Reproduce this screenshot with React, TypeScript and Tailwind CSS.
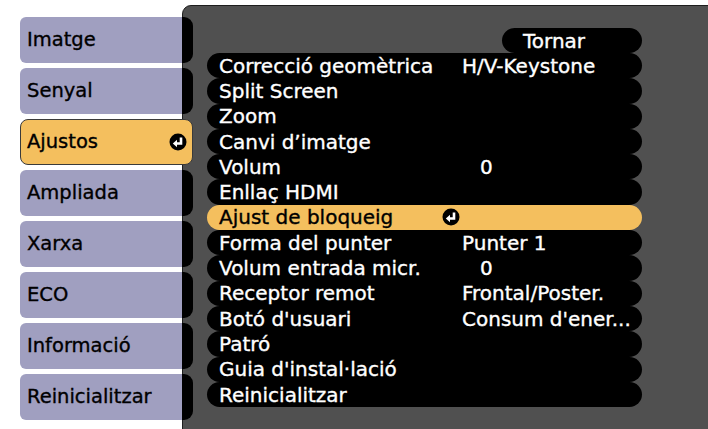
const tabs = [
    'Imatge',
    'Senyal',
    'Ajustos',
    'Ampliada',
    'Xarxa',
    'ECO',
    'Informació',
    'Reinicialitzar',
];

const rows = [
    { label: 'Correcció geomètrica', value: 'H/V-Keystone' },
    { label: 'Split Screen', value: '' },
    { label: 'Zoom', value: '' },
    { label: 'Canvi d’imatge', value: '' },
    { label: 'Volum', value: '0', indent: true },
    { label: 'Enllaç HDMI', value: '' },
    { label: 'Ajust de bloqueig', value: '', active: true },
    { label: 'Forma del punter', value: 'Punter 1' },
    { label: 'Volum entrada micr.', value: '0', indent: true },
    { label: 'Receptor remot', value: 'Frontal/Poster.' },
    { label: "Botó d'usuari", value: "Consum d'ener..." },
    { label: 'Patró', value: '' },
    { label: "Guia d'instal·lació", value: '' },
    { label: 'Reinicialitzar', value: '' },
];

const EnterIcon = () => (
    <svg width="18" height="18" viewBox="0 0 18 18">
        <circle cx="9" cy="9" r="8.5" fill="#000" />
        <path d="M12 4.5 V10.5 H7" stroke="#fff" strokeWidth="2.6" fill="none" />
        <path d="M3.8 10.5 L8 6.8 V14.2 Z" fill="#fff" />
    </svg>
);

export default function App() {
    return (
        <div className="flex h-[429px] w-[708px] overflow-hidden bg-white font-['DejaVu_Sans',sans-serif] [-webkit-text-stroke:0.35px_currentColor]">
            {/* menu tabs */}
            <div className="relative z-10 flex w-[193px] shrink-0 flex-col gap-[5px] pt-[17px] pl-[20px]">
                {tabs.map((t) =>
                    t === 'Ajustos' ? (
                        <div
                            key={t}
                            className="flex h-[46px] items-center justify-between rounded-[8px] border border-[#3a3a3a] bg-[#f4bf5e] pr-[5px] pl-[6px] text-[19.5px] text-black"
                        >
                            <span>{t}</span>
                            <EnterIcon />
                        </div>
                    ) : (
                        <div key={t} className="flex h-[46px]">
                            <div className="flex flex-1 items-center rounded-l-[6px] bg-[#a09fc0] pl-[7px] text-[19.5px] text-black">
                                {t}
                            </div>
                            <div className="w-[11px] rounded-r-[9px] bg-black" />
                        </div>
                    ),
                )}
            </div>

            {/* settings panel */}
            <div className="-mr-[4px] mt-[5px] -ml-[11px] h-[440px] flex-1 rounded-tl-[9px] border border-[#1e1e1e] bg-[#505050] pt-[22px] pl-[24px]">
                <div className="flex w-[435px] flex-col text-[20px] text-white">
                    <div className="flex h-[25px] w-[140px] items-center self-end rounded-full bg-black pl-[21px] leading-none">
                        Tornar
                    </div>
                    {rows.map((r) => (
                        <div
                            key={r.label}
                            className={`grid h-[25.3px] grid-cols-[12px_223px_20px_1fr] items-center rounded-full leading-none ${
                                r.active ? 'bg-[#f4bf5e] text-black' : 'bg-black'
                            }`}
                        >
                            <span />
                            <span className="whitespace-nowrap">{r.label}</span>
                            <span className="flex items-center">{r.active && <EnterIcon />}</span>
                            <span className={`whitespace-nowrap ${r.indent ? 'pl-[18px]' : ''}`}>{r.value}</span>
                        </div>
                    ))}
                </div>
            </div>
        </div>
    );
}
